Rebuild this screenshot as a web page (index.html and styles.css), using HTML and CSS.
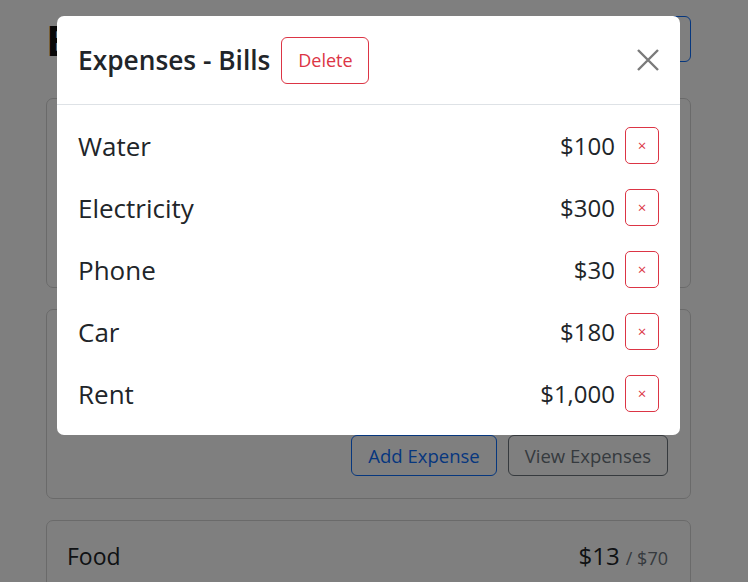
FILE: index.html
```html
<!DOCTYPE html>
<html lang="en">
<head>
<meta charset="utf-8">
<title>Budget App</title>
<link rel="stylesheet" href="styles.css">
</head>
<body>
<div class="page">
  <header class="top">
    <h1 class="brand">Budget App</h1>
    <div class="top-actions">
      <button class="btn btn-blue">Add Budget</button>
    </div>
  </header>

  <section class="card"></section>

  <section class="card">
    <div class="card-actions">
      <button class="btn btn-blue">Add Expense</button>
      <button class="btn btn-gray">View Expenses</button>
    </div>
  </section>

  <section class="card">
    <div class="card-row">
      <span class="card-name">Food</span>
      <span class="card-amt">$13 <span class="card-max">/ $70</span></span>
    </div>
  </section>
</div>

<div class="backdrop"></div>

<div class="modal" role="dialog">
  <div class="modal-header">
    <h5 class="modal-title">Expenses - Bills</h5>
    <button class="btn-delete">Delete</button>
    <button class="btn-close" aria-label="Close">
      <svg width="22" height="22" viewBox="0 0 22 22"><path d="M1 1 L21 21 M21 1 L1 21" stroke="#7a7a7a" stroke-width="2.4" fill="none"/></svg>
    </button>
  </div>
  <div class="modal-body">
    <div class="item"><span class="item-name">Water</span><span class="item-amt">$100</span><button class="btn-x">&times;</button></div>
    <div class="item"><span class="item-name">Electricity</span><span class="item-amt">$300</span><button class="btn-x">&times;</button></div>
    <div class="item"><span class="item-name">Phone</span><span class="item-amt">$30</span><button class="btn-x">&times;</button></div>
    <div class="item"><span class="item-name">Car</span><span class="item-amt">$180</span><button class="btn-x">&times;</button></div>
    <div class="item"><span class="item-name">Rent</span><span class="item-amt">$1,000</span><button class="btn-x">&times;</button></div>
  </div>
</div>
</body>
</html>
```
FILE: styles.css
```css
* { box-sizing: border-box; }
html, body { margin: 0; padding: 0; }
body {
  font-family: "Open Sans", "Noto Sans", sans-serif;
  color: #212529;
  background: #fff;
  overflow: hidden;
  height: 582px;
}
.page {
  margin-left: 46px;
  width: 645px;
  padding-top: 16px;
}
.top {
  display: flex;
  align-items: center;
  justify-content: space-between;
  height: 46px;
}
.brand {
  margin: 0;
  font-size: 42px;
  font-weight: 700;
  color: #111;
}
.btn {
  font-family: inherit;
  font-size: 18.5px;
  background: transparent;
  border-radius: 6px;
  padding: 0 16px;
  height: 41px;
}
.top .btn { height: 46px; }
.btn-blue { border: 1px solid #0d6efd; color: #0d6efd; }
.btn-gray { border: 1px solid #6c757d; color: #6c757d; }
.card {
  border: 1px solid #d5d5d5;
  border-radius: 7px;
  height: 190px;
  padding: 18px 22px 21px 20px;
  display: flex;
  flex-direction: column;
  margin-bottom: 21px;
}
.page .card:first-of-type { margin-top: 36px; }
.card-row {
  display: flex;
  justify-content: space-between;
  align-items: baseline;
  height: 36px;
}
.card-name { font-size: 23px; }
.card-amt { font-size: 24px; }
.card-max { font-size: 18px; color: #6c757d; }
.card-actions {
  margin-top: auto;
  display: flex;
  justify-content: flex-end;
  gap: 11px;
  padding-bottom: 1px;
}
.backdrop {
  position: fixed;
  inset: 0;
  background: rgba(0, 0, 0, 0.5);
}
.modal {
  position: fixed;
  left: 57px;
  top: 16px;
  width: 623px;
  background: #fff;
  border-radius: 7px;
}
.modal-header {
  display: flex;
  align-items: center;
  padding: 20px 21px 20px 21px;
  border-bottom: 1px solid #dee2e6;
  height: 89px;
}
.modal-title {
  margin: 0;
  font-size: 26.3px;
  font-weight: 600;
  color: #212529;
}
.btn-delete {
  margin-left: 11px;
  height: 47px;
  width: 88px;
  font-family: inherit;
  font-size: 18px;
  color: #dc3545;
  background: #fff;
  border: 1px solid #dc3545;
  border-radius: 6px;
  padding: 0;
}
.btn-close {
  margin-left: auto;
  background: none;
  border: 0;
  padding: 0;
  width: 22px;
  height: 22px;
  display: flex;
}
.modal-body {
  padding: 22px 21px 23px 21px;
  display: flex;
  flex-direction: column;
  gap: 25px;
}
.item {
  display: flex;
  align-items: center;
  height: 37px;
}
.item-name {
  flex: 1;
  font-size: 26px;
}
.item-amt {
  font-size: 24px;
}
.btn-x {
  margin-left: 10px;
  width: 34px;
  height: 37px;
  border: 1px solid #dc3545;
  border-radius: 5px;
  background: #fff;
  color: #dc3545;
  font-family: inherit;
  font-size: 15px;
  padding: 0;
  line-height: 1;
}
```
